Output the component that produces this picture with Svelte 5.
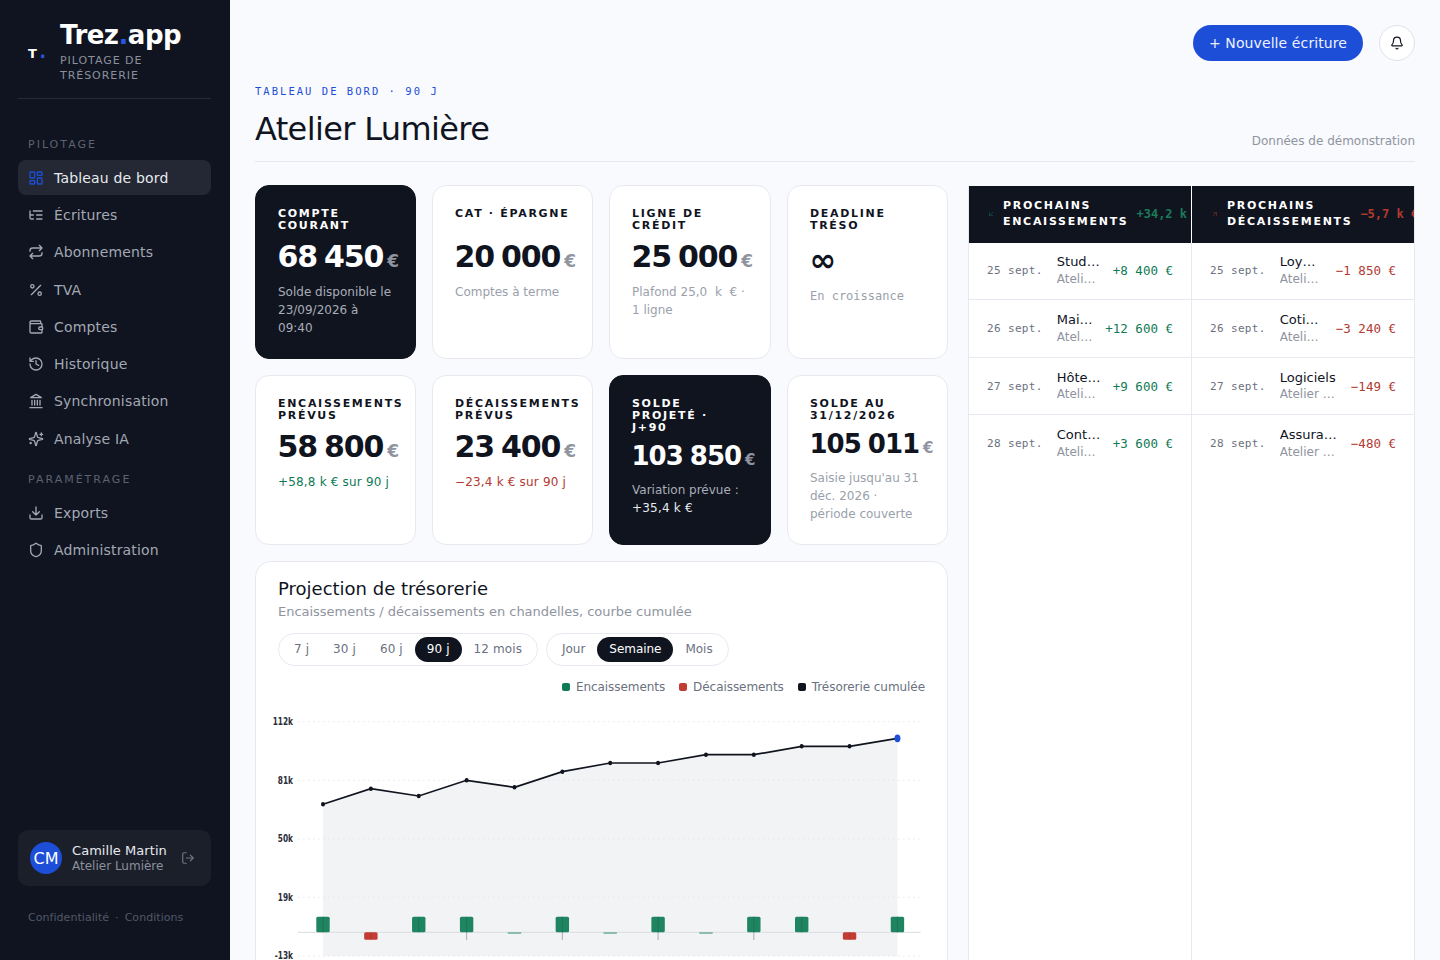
<script>
  const navA = [
    { label: 'Tableau de bord', icon: 'dash', active: true },
    { label: 'Écritures', icon: 'tree' },
    { label: 'Abonnements', icon: 'repeat' },
    { label: 'TVA', icon: 'percent' },
    { label: 'Comptes', icon: 'wallet' },
    { label: 'Historique', icon: 'history' },
    { label: 'Synchronisation', icon: 'bank' },
    { label: 'Analyse IA', icon: 'spark' }
  ];
  const navB = [
    { label: 'Exports', icon: 'download' },
    { label: 'Administration', icon: 'shield' }
  ];
  const cardsA = [
    { label: 'Compte courant', value: '68 450', sub: 'Solde disponible le 23/09/2026 à 09:40', dark: true },
    { label: 'CAT · Épargne', value: '20 000', sub: 'Comptes à terme' },
    { label: 'Ligne de crédit', value: '25 000', sub: 'Plafond 25,0\u2007k\u2007€ · 1 ligne' },
    { label: 'Deadline tréso', value: '∞', sub: 'En croissance', inf: true }
  ];
  const cardsB = [
    { label: 'Encaissements prévus', value: '58 800', sub: '+58,8 k € sur 90 j', tone: 'up' },
    { label: 'Décaissements prévus', value: '23 400', sub: '−23,4 k € sur 90 j', tone: 'down' },
    { label: 'Solde projeté · J+90', value: '103 850', sub: 'Variation prévue :', sub2: '+35,4 k €', dark: true, tight: true },
    { label: 'Solde au 31/12/2026', value: '105 011', sub: "Saisie jusqu'au 31 déc. 2026 · période couverte", tight: true }
  ];
  const inRows = [
    ['25 sept.', 'Studio Lumen', 'Atelier Lumière', '+8 400 €'],
    ['26 sept.', 'Maison Orée', 'Atelier Lumière', '+12 600 €'],
    ['27 sept.', 'Hôtel Beaumont', 'Atelier Lumière', '+9 600 €'],
    ['28 sept.', 'Contrat Nord', 'Atelier Lumière', '+3 600 €']
  ];
  const outRows = [
    ['25 sept.', 'Loyer atelier', 'Atelier Lumière', '−1 850 €'],
    ['26 sept.', 'Cotisations', 'Atelier Lumière', '−3 240 €'],
    ['27 sept.', 'Logiciels', 'Atelier Lumière', '−149 €'],
    ['28 sept.', 'Assurance pro', 'Atelier Lumière', '−480 €']
  ];
  const ranges = ['7 j', '30 j', '60 j', '90 j', '12 mois'];
  const grains = ['Jour', 'Semaine', 'Mois'];

  const step = 47.87;
  const x0 = 67;
  const ys = [804.3, 788.7, 796, 780.3, 787.3, 771.7, 763, 763, 754.7, 754.7, 746.3, 746.3, 738.3].map((y) => y - 700);
  const kinds = ['g', 'r', 'g', 'gw', 't', 'gw', 't', 'gw', 't', 'gw', 'g', 'r', 'g'];
  const pts = ys.map((y, i) => [x0 + step * i, y]);
  const line = pts.map((p) => p.join(',')).join(' ');
  const area = `${x0},256 ${line} ${pts[12][0]},256`;
  const grid = [[21.7, '112k'], [80.3, '81k'], [139, '50k'], [197.3, '19k'], [256, '-13k']];
</script>

{#snippet icon(name)}
  <svg class="ico" viewBox="0 0 24 24">
    {#if name === 'dash'}
      <rect x="3" y="3" width="7" height="9" rx="1" /><rect x="14" y="3" width="7" height="5" rx="1" /><rect x="14" y="12" width="7" height="9" rx="1" /><rect x="3" y="16" width="7" height="5" rx="1" />
    {:else if name === 'tree'}
      <path d="M21 12h-8M21 6H8M21 18h-8M3 6v4c0 1.1.9 2 2 2h3M3 10v6c0 1.1.9 2 2 2h3" />
    {:else if name === 'repeat'}
      <path d="m17 2 4 4-4 4M3 11v-1a4 4 0 0 1 4-4h14M7 22l-4-4 4-4M21 13v1a4 4 0 0 1-4 4H3" />
    {:else if name === 'percent'}
      <path d="M19 5 5 19" /><circle cx="6.5" cy="6.5" r="2.5" /><circle cx="17.5" cy="17.5" r="2.5" />
    {:else if name === 'wallet'}
      <path d="M19 7V4a1 1 0 0 0-1-1H5a2 2 0 0 0 0 4h15a1 1 0 0 1 1 1v4h-3a2 2 0 0 0 0 4h3a1 1 0 0 0 1-1v-2a1 1 0 0 0-1-1M3 5v14a2 2 0 0 0 2 2h15a1 1 0 0 0 1-1v-4" />
    {:else if name === 'history'}
      <path d="M3 12a9 9 0 1 0 9-9 9.75 9.75 0 0 0-6.74 2.74L3 8M3 3v5h5M12 7v5l4 2" />
    {:else if name === 'bank'}
      <path d="M3 22h18M6 18v-7M10 18v-7M14 18v-7M18 18v-7M12 2l8 5H4z" />
    {:else if name === 'spark'}
      <path d="M9.937 15.5A2 2 0 0 0 8.5 14.063l-6.135-1.582a.5.5 0 0 1 0-.962L8.5 9.936A2 2 0 0 0 9.937 8.5l1.582-6.135a.5.5 0 0 1 .963 0L14.063 8.5A2 2 0 0 0 15.5 9.937l6.135 1.581a.5.5 0 0 1 0 .964L15.5 14.063a2 2 0 0 0-1.437 1.437l-1.582 6.135a.5.5 0 0 1-.963 0zM20 3v4M22 5h-4M4 17v2M5 18H3" />
    {:else if name === 'download'}
      <path d="M21 15v4a2 2 0 0 1-2 2H5a2 2 0 0 1-2-2v-4M7 10l5 5 5-5M12 15V3" />
    {:else if name === 'shield'}
      <path d="M20 13c0 5-3.5 7.5-7.66 8.95a1 1 0 0 1-.67-.01C7.5 20.5 4 18 4 13V6a1 1 0 0 1 1-1c2 0 4.5-1.2 6.24-2.72a1.17 1.17 0 0 1 1.52 0C14.51 3.81 17 5 19 5a1 1 0 0 1 1 1z" />
    {:else if name === 'logout'}
      <path d="M9 21H5a2 2 0 0 1-2-2V5a2 2 0 0 1 2-2h4M16 17l5-5-5-5M21 12H9" />
    {:else if name === 'bell'}
      <path d="M10.268 21a2 2 0 0 0 3.464 0M3.262 15.326A1 1 0 0 0 4 17h16a1 1 0 0 0 .74-1.673C19.41 13.956 18 12.499 18 8A6 6 0 0 0 6 8c0 4.499-1.411 5.956-2.738 7.326" />
    {:else if name === 'downleft'}
      <path d="M17 7 7 17M17 17H7V7" />
    {:else if name === 'upright'}
      <path d="M7 7h10v10M7 17 17 7" />
    {/if}
  </svg>
{/snippet}

{#snippet navItem(item)}
  <div class="nav-item" class:active={item.active}>
    {@render icon(item.icon)}
    <span>{item.label}</span>
  </div>
{/snippet}

{#snippet card(c)}
  <div class="card" class:dark={c.dark} class:tight={c.tight}>
    <div class="card-label">{c.label}</div>
    <div class="card-value" class:inf={c.inf}>{c.value}{#if !c.inf}<span class="eur">€</span>{/if}</div>
    <div class="card-sub {c.tone || ''}" class:mono={c.inf}>{c.sub}{#if c.sub2}<br /><span class="sub2">{c.sub2}</span>{/if}</div>
  </div>
{/snippet}

{#snippet flow(title, total, rows, tone, arrow)}
  <div class="flow">
    <div class="flow-head">
      <span class="flow-arrow {tone}">{@render icon(arrow)}</span>
      <span class="flow-title">{title}</span>
      <span class="flow-total {tone}">{total}</span>
    </div>
    {#each rows as r, i}
      <div class="flow-row" class:last={i === rows.length - 1}>
        <span class="flow-date">{r[0]}</span>
        <div class="flow-info">
          <div class="flow-name">{r[1]}</div>
          <div class="flow-org">{r[2]}</div>
        </div>
        <span class="flow-amt {tone}">{r[3]}</span>
      </div>
    {/each}
  </div>
{/snippet}

<div class="app">
  <aside class="side">
    <div class="brand">
      <div class="mark">T<span>.</span></div>
      <div class="brand-text">
        <div class="brand-name">Trez<span>.</span>app</div>
        <div class="brand-tag">PILOTAGE DE TRÉSORERIE</div>
      </div>
    </div>
    <div class="sec sec-a">PILOTAGE</div>
    <nav class="nav">
      {#each navA as item}{@render navItem(item)}{/each}
    </nav>
    <div class="sec sec-b">PARAMÉTRAGE</div>
    <nav class="nav">
      {#each navB as item}{@render navItem(item)}{/each}
    </nav>
    <div class="user">
      <div class="avatar">CM</div>
      <div class="user-text">
        <div class="user-name">Camille Martin</div>
        <div class="user-org">Atelier Lumière</div>
      </div>
      <span class="logout">{@render icon('logout')}</span>
    </div>
    <div class="legal"><span>Confidentialité</span><span>·</span><span>Conditions</span></div>
  </aside>

  <main class="main">
    <div class="top">
      <button class="primary">+ Nouvelle écriture</button>
      <button class="bell">{@render icon('bell')}</button>
    </div>
    <div class="eyebrow">TABLEAU DE BORD · 90 J</div>
    <header class="head">
      <h1>Atelier Lumière</h1>
      <span class="demo">Données de démonstration</span>
    </header>

    <div class="layout">
      <section class="left">
        <div class="cards row-a">
          {#each cardsA as c}{@render card(c)}{/each}
        </div>
        <div class="cards row-b">
          {#each cardsB as c}{@render card(c)}{/each}
        </div>
        <div class="chart-card">
          <h2>Projection de trésorerie</h2>
          <p class="chart-sub">Encaissements / décaissements en chandelles, courbe cumulée</p>
          <div class="filters">
            <div class="seg">
              {#each ranges as r}<span class:on={r === '90 j'}>{r}</span>{/each}
            </div>
            <div class="seg">
              {#each grains as g}<span class:on={g === 'Semaine'}>{g}</span>{/each}
            </div>
          </div>
          <div class="legend">
            <span><i class="g"></i>Encaissements</span>
            <span><i class="r"></i>Décaissements</span>
            <span><i class="k"></i>Trésorerie cumulée</span>
          </div>
          <svg class="chart" width="691" height="262" viewBox="0 0 691 262">
            <polygon points={area} fill="#f2f3f4" />
            {#each grid as g}
              <line x1="42" x2="664.7" y1={g[0]} y2={g[0]} stroke="#e4e6ea" stroke-width="1" stroke-dasharray="1.5 3.5" />
              <text transform="translate(37,{g[0] + 3.4}) scale(0.74,1)" text-anchor="end" class="axis">{g[1]}</text>
            {/each}
            <line x1="42" x2="664.7" y1="232.3" y2="232.3" stroke="#d9dbdf" stroke-width="1" />
            {#each pts as p, i}
              {@const k = kinds[i]}
              {#if k === 'gw'}
                <line x1={p[0]} x2={p[0]} y1="232" y2="240" stroke="#a8acb2" stroke-width="1" />
              {/if}
              {#if k === 'g' || k === 'gw'}
                <rect x={p[0] - 6.7} y="216.7" width="13.4" height="15.6" rx="1.5" fill="#1f8560" />
                <line x1={p[0]} x2={p[0]} y1="216.7" y2="232.3" stroke="#17694c" stroke-width="0.6" />
              {:else if k === 'r'}
                <rect x={p[0] - 6.7} y="232.3" width="13.4" height="7.4" rx="1.5" fill="#c23c33" />
                <line x1={p[0]} x2={p[0]} y1="232.3" y2="239.7" stroke="#a5332b" stroke-width="0.6" />
              {:else}
                <rect x={p[0] - 6.7} y="232.3" width="13.4" height="1.5" fill="#1f8560" opacity="0.6" />
              {/if}
            {/each}
            <polyline points={line} fill="none" stroke="#10141f" stroke-width="1.7" />
            {#each pts as p, i}
              {#if i < 12}
                <ellipse cx={p[0]} cy={p[1]} rx="2" ry="2.3" fill="#10141f" />
              {:else}
                <ellipse cx={p[0]} cy={p[1]} rx="3" ry="3.9" fill="#1d4ed8" />
              {/if}
            {/each}
          </svg>
        </div>
      </section>

      <section class="flows">
        {@render flow('PROCHAINS ENCAISSEMENTS', '+34,2 k', inRows, 'up', 'downleft')}
        {@render flow('PROCHAINS DÉCAISSEMENTS', '−5,7 k €', outRows, 'down', 'upright')}
      </section>
    </div>
  </main>
</div>

<style>
  :global(body) {
    margin: 0;
    background: #f8fafd;
    overflow: hidden;
  }
  .app {
    display: flex;
    height: 960px;
    overflow: hidden;
    font-family: "DejaVu Sans", sans-serif;
    color: #10141f;
  }
  .ico {
    width: 16px;
    height: 16px;
    display: block;
    fill: none;
    stroke: currentColor;
    stroke-width: 2;
    stroke-linecap: round;
    stroke-linejoin: round;
    flex: none;
  }
  .side {
    width: 230px;
    flex: none;
    box-sizing: border-box;
    background: #0f1420;
    padding: 0 19px 0 18px;
    display: flex;
    flex-direction: column;
    color: #a3a8b3;
  }
  .brand {
    height: 99px;
    box-sizing: border-box;
    border-bottom: 1px solid #262b36;
    display: flex;
    align-items: center;
    padding: 2px 0 0 10px;
    gap: 12px;
  }
  .mark {
    width: 20px;
    margin-top: 6px;
    font-size: 13px;
    font-weight: 700;
    color: #fff;
    flex: none;
    white-space: nowrap;
  }
  .mark span {
    color: #2556e0;
    margin-left: 2.5px;
    font-size: 17px;
    line-height: 13px;
  }
  .brand-name span {
    color: #2556e0;
  }
  .brand-name {
    font-size: 26px;
    line-height: 34px;
    font-weight: 700;
    color: #fff;
    letter-spacing: -0.5px;
    margin-top: 1px;
  }
  .brand-tag {
    font-size: 11px;
    line-height: 15px;
    letter-spacing: 0.95px;
    color: #8b909c;
    margin-top: 1px;
  }
  .sec {
    font-size: 11px;
    line-height: 14px;
    letter-spacing: 2px;
    color: #5c6270;
    padding-left: 10px;
  }
  .sec-a {
    margin-top: 39px;
    margin-bottom: 8px;
  }
  .sec-b {
    margin-top: 17px;
    margin-bottom: 8px;
  }
  .nav {
    display: flex;
    flex-direction: column;
    gap: 2px;
  }
  .nav-item {
    height: 35.3px;
    display: flex;
    align-items: center;
    gap: 10px;
    padding-left: 10px;
    border-radius: 8px;
    font-size: 14px;
    letter-spacing: 0.17px;
    color: #a3a8b3;
  }
  .nav-item.active {
    background: #232834;
    color: #e8eaee;
  }
  .nav-item.active .ico {
    color: #1d4ed8;
  }
  .user {
    margin-top: auto;
    height: 56px;
    background: #1a1f2a;
    border-radius: 10px;
    display: flex;
    align-items: center;
    padding: 0 16px 0 12px;
    gap: 10px;
  }
  .avatar {
    width: 32px;
    height: 32px;
    border-radius: 50%;
    background: #1d4ed8;
    color: #fff;
    font-size: 16px;
    display: flex;
    align-items: center;
    justify-content: center;
    flex: none;
  }
  .user-text {
    flex: 1;
    min-width: 0;
  }
  .user-name {
    font-size: 13px;
    line-height: 15px;
    letter-spacing: 0.05px;
    color: #e8eaee;
    white-space: nowrap;
  }
  .user-org {
    font-size: 12px;
    line-height: 16px;
    color: #8b909c;
    white-space: nowrap;
  }
  .logout {
    color: #6f7582;
  }
  .logout .ico {
    width: 14px;
    height: 14px;
  }
  .legal {
    display: flex;
    gap: 6px;
    font-size: 11px;
    line-height: 14px;
    letter-spacing: 0.05px;
    color: #525866;
    padding: 25px 0 35px 10px;
  }
  .main {
    flex: 1;
    min-width: 0;
    box-sizing: border-box;
    padding: 25px 25px 0;
  }
  .top {
    display: flex;
    justify-content: flex-end;
    gap: 16px;
    height: 36px;
  }
  .primary {
    height: 36px;
    width: 170px;
    border: 0;
    border-radius: 18px;
    background: #1d4ed8;
    color: #eef2fe;
    font: 14px "DejaVu Sans", sans-serif;
    letter-spacing: 0.1px;
    padding: 0;
  }
  .bell {
    width: 36px;
    height: 36px;
    border-radius: 50%;
    border: 1px solid #dfe2e8;
    background: #fff;
    color: #10141f;
    padding: 0;
    display: flex;
    align-items: center;
    justify-content: center;
  }
  .bell .ico {
    width: 14px;
    height: 14px;
  }
  .eyebrow {
    margin-top: 24px;
    font: 10.5px/12px "DejaVu Sans Mono", monospace;
    letter-spacing: 2.03px;
    color: #1d4ed8;
  }
  .head {
    display: flex;
    justify-content: space-between;
    align-items: flex-end;
    margin-top: 10px;
    padding-bottom: 10px;
    border-bottom: 1px solid #e4e7ee;
  }
  h1 {
    margin: 0;
    font-size: 32px;
    line-height: 44px;
    font-weight: 400;
    letter-spacing: -0.64px;
  }
  .demo {
    font-size: 12px;
    line-height: 16px;
    margin-bottom: 2px;
    color: #8f94a0;
  }
  .layout {
    display: flex;
    gap: 20px;
    margin-top: 23px;
    align-items: stretch;
  }
  .left {
    width: 693px;
    flex: none;
  }
  .cards {
    display: grid;
    grid-template-columns: 161px 161px 162px 161px;
    gap: 16px;
  }
  .row-a {
    height: 174px;
  }
  .row-b {
    height: 170px;
    margin-top: 16px;
  }
  .card {
    box-sizing: border-box;
    background: #fff;
    border: 1px solid #e6e9f0;
    border-radius: 14px;
    padding: 22px 22px 0 22px;
    min-width: 0;
  }
  .card.dark {
    background: #10141f;
    border-color: #10141f;
    color: #fff;
  }
  .card-label {
    font-size: 11px;
    line-height: 12px;
    font-weight: 700;
    letter-spacing: 1.7px;
    text-transform: uppercase;
    min-height: 24px;
  }
  .card-value {
    font-size: 30px;
    line-height: 38px;
    font-weight: 700;
    letter-spacing: -1.2px;
    word-spacing: -2px;
    margin-top: 6px;
    margin-left: -0.5px;
    white-space: nowrap;
  }
  .card.tight .card-value {
    margin-top: 3px;
    font-size: 26px;
    letter-spacing: -1px;
    word-spacing: -1px;
  }
  .card-value.inf {
    margin-top: 9px;
    font-size: 32px;
    letter-spacing: 0;
  }
  .eur {
    font-size: 17px;
    letter-spacing: 0;
    margin-left: 4px;
    color: #8f94a0;
  }
  .card.tight .eur {
    font-size: 15px;
  }
  .card-sub {
    font-size: 12px;
    line-height: 18px;
    color: #9a9fab;
    margin-top: 3px;
  }
  .card.tight .card-sub {
    margin-top: 2px;
  }
  .card-sub.mono {
    font-family: "DejaVu Sans Mono", monospace;
    margin-top: 8px;
  }
  .dark .card-sub {
    color: #a9adb7;
  }
  .sub2 {
    color: #e8eaee;
    letter-spacing: 0.2px;
  }
  .card-sub.up, .card-sub.down {
    letter-spacing: 0.18px;
  }
  .card-sub.up, .flow-amt.up {
    color: #0f7a55;
  }
  .card-sub.down, .flow-amt.down {
    color: #b23a30;
  }
  .chart-card {
    margin-top: 16px;
    height: 500px;
    box-sizing: border-box;
    background: #fff;
    border: 1px solid #e6e9f0;
    border-radius: 16px;
    padding: 16px 0 0 22px;
  }
  h2 {
    margin: 0;
    font-size: 18px;
    line-height: 22px;
    font-weight: 400;
  }
  .chart-sub {
    margin: 3px 0 0;
    font-size: 13px;
    line-height: 18px;
    letter-spacing: -0.02px;
    color: #8f94a0;
  }
  .filters {
    display: flex;
    gap: 8px;
    margin-top: 12px;
  }
  .seg {
    height: 33px;
    box-sizing: border-box;
    border: 1px solid #e6e9f0;
    border-radius: 17px;
    display: flex;
    align-items: center;
    padding: 0 3px;
    font-size: 12px;
    letter-spacing: 0.1px;
    color: #6b7180;
  }
  .seg + .seg {
    letter-spacing: -0.03px;
  }
  .seg span {
    height: 25px;
    line-height: 25px;
    padding: 0 12px;
    border-radius: 13px;
  }
  .seg span.on {
    background: #10141f;
    color: #fff;
  }
  .legend {
    display: flex;
    justify-content: flex-end;
    gap: 14px;
    margin: 13px 22px 0 0;
    font-size: 12px;
    line-height: 16px;
    letter-spacing: -0.06px;
    color: #6b7180;
  }
  .legend span {
    display: flex;
    align-items: center;
    gap: 6px;
  }
  .legend i {
    width: 8px;
    height: 8px;
    border-radius: 2px;
  }
  .legend .g { background: #0f7a55; }
  .legend .r { background: #c23c33; }
  .legend .k { background: #10141f; }
  .chart {
    display: block;
    margin: 5px 0 0 -22px;
  }
  .axis {
    font-size: 10px;
    font-weight: 700;
    fill: #2a2e38;
  }
  .flows {
    flex: 1;
    min-width: 0;
    margin-top: 1px;
    height: 800px;
    display: flex;
    background: #fff;
    border: 1px solid #e6e9f0;
    border-top: 0;
    box-sizing: border-box;
    overflow: hidden;
  }
  .flow {
    flex: 1 1 0;
    min-width: 0;
    border-right: 1px solid #e6e9f0;
  }
  .flow:last-child {
    border-right: 0;
  }
  .flow-head {
    height: 56.5px;
    box-sizing: border-box;
    padding: 0 0 1px 18px;
    background: #10141f;
    display: flex;
    align-items: center;
    gap: 8px;
  }
  .flow:first-child .flow-head {
    box-shadow: 1px 0 0 #fff;
  }
  .flow:last-child .flow-arrow {
    margin-left: 1px;
  }
  .flow-arrow {
    opacity: 0.7;
    flex: none;
  }
  .flow-arrow .ico {
    width: 8px;
    height: 8px;
  }
  .flow-arrow.up, .flow-total.up {
    color: #1a7a5a;
  }
  .flow-arrow.down, .flow-total.down {
    color: #b23a30;
  }
  .flow-title {
    font-size: 11px;
    line-height: 16px;
    font-weight: 700;
    letter-spacing: 1.7px;
    color: #fff;
    flex: none;
    width: min-content;
  }
  .flow-total {
    font: 700 12px "DejaVu Sans Mono", monospace;
    white-space: nowrap;
    flex: none;
  }
  .flow-row {
    height: 56.67px;
    display: flex;
    align-items: center;
    padding: 0 18px;
    gap: 12px;
    border-bottom: 1px solid #e6e9f0;
  }
  .flow-row.last {
    border-bottom: 0;
  }
  .flow-date {
    font: 11px "DejaVu Sans Mono", monospace;
    letter-spacing: 0.35px;
    margin-right: 2px;
    color: #6b7180;
    white-space: nowrap;
    flex: none;
  }
  .flow-info {
    flex: 1;
    min-width: 0;
    margin-top: 0.7px;
  }
  .flow:last-child .flow-info {
    padding-right: 1px;
  }
  .flow-name, .flow-org {
    white-space: nowrap;
    overflow: hidden;
    text-overflow: ellipsis;
  }
  .flow-name {
    font-size: 13px;
    line-height: 17.7px;
  }
  .flow-org {
    font-size: 12px;
    line-height: 17.7px;
    color: #8f94a0;
  }
  .flow-amt {
    font: 12.5px "DejaVu Sans Mono", monospace;
    white-space: nowrap;
    flex: none;
  }
</style>
